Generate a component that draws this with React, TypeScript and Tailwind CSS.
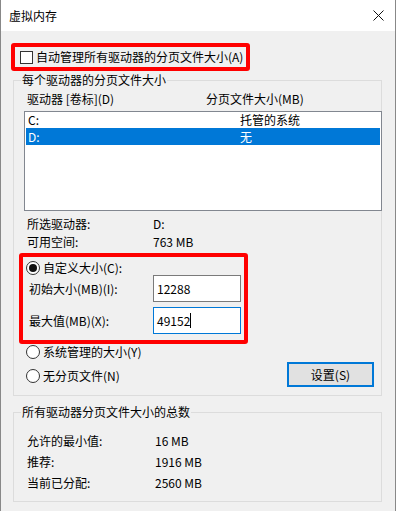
import { FC, ReactNode } from "react";

const font = "font-['Noto_Sans_CJK_SC','Noto_Sans',sans-serif]";

const Radio: FC<{ checked?: boolean }> = ({ checked }) => (
  <span className="w-[14px] h-[14px] rounded-full border border-[#333] bg-white flex items-center justify-center shrink-0">
    {checked && <span className="w-[8px] h-[8px] rounded-full bg-[#111]" />}
  </span>
);

const Group: FC<{ title: string; className?: string; children: ReactNode }> = (props) => (
  <div className={"relative ml-[12px] w-[369px] border border-[#dcdcdc] " + (props.className ?? "")}>
    <span className="absolute left-[7px] -top-[9px] px-[1px] bg-[#f0f0f0] leading-[16px]">{props.title}</span>
    {props.children}
  </div>
);

const App: FC = () => {
  return (
    <div className={"w-[396px] h-[511px] bg-[#f0f0f0] border-x border-[#888] text-[12px] text-black leading-[16px] overflow-hidden " + font}>
      <div className="h-[31px] bg-white flex items-center justify-between pl-2 pr-[10px]">
        <span>虚拟内存</span>
        <svg width="11" height="11" viewBox="0 0 11 11" className="mr-[1px]">
          <path d="M0.5 0.5 L10.5 10.5 M10.5 0.5 L0.5 10.5" stroke="#111" strokeWidth="1" />
        </svg>
      </div>

      <div className="mt-[12px] ml-[10px] w-[239px] h-[28px] border-4 border-[#ff0000] rounded-[3px] flex items-center pl-[5px] gap-[3px]">
        <span className="w-[13px] h-[13px] border border-[#333] bg-white" />
        <span>自动管理所有驱动器的分页文件大小(A)</span>
      </div>

      <Group title="每个驱动器的分页文件大小" className="mt-[9px] h-[316px]">
        <div className="flex mt-[10px] pl-[13px]">
          <span className="w-[179px]">驱动器 [卷标](D)</span>
          <span>分页文件大小(MB)</span>
        </div>
        <div className="mt-[4px] ml-[10px] w-[358px] h-[100px] border border-[#828790] bg-white">
          <div className="flex h-[16px] items-center mx-[1px] pl-[2px]">
            <span className="w-[212px]">C:</span>
            <span>托管的系统</span>
          </div>
          <div className="flex h-[17px] items-center mx-[1px] pl-[2px] bg-[#0078d7] text-white">
            <span className="w-[212px]">D:</span>
            <span>无</span>
          </div>
        </div>
        <div className="mt-[4px] pl-[13px] leading-[18px]">
          <div className="flex">
            <span className="w-[126px]">所选驱动器:</span>
            <span>D:</span>
          </div>
          <div className="flex">
            <span className="w-[126px]">可用空间:</span>
            <span>763 MB</span>
          </div>
        </div>

        <div className="mt-[2px] ml-[5px] w-[229px] h-[91px] border-4 border-[#ff0000] rounded-[3px]">
          <div className="mt-[3px] h-[15px] flex items-center pl-[3px] gap-[3px]">
            <Radio checked />
            <span>自定义大小(C):</span>
          </div>
          <div className="flex items-center pl-[6px]">
            <span className="w-[124px]">初始大小(MB)(I):</span>
            <div className="w-[88px] h-[27px] border border-[#7a7a7a] bg-white flex items-center pl-[3px]">12288</div>
          </div>
          <div className="flex items-center pl-[6px] mt-[5px]">
            <span className="w-[124px]">最大值(MB)(X):</span>
            <div className="w-[88px] h-[27px] border border-[#0078d7] bg-white flex items-center pl-[3px]">
              <span>49152</span>
              <span className="w-[1px] h-[15px] bg-black" />
            </div>
          </div>
        </div>

        <div className="h-[16px] flex items-center pl-[12px] gap-[3px]">
          <Radio />
          <span>系统管理的大小(Y)</span>
        </div>
        <div className="mt-[2px] flex items-center justify-between pl-[12px] pr-[7px]">
          <div className="flex items-center gap-[3px] mt-[3px]">
            <Radio />
            <span>无分页文件(N)</span>
          </div>
          <button className="w-[87px] h-[25px] border-2 border-[#0078d7] bg-[#e1e1e1] flex items-center justify-center">
            设置(S)
          </button>
        </div>
      </Group>

      <Group title="所有驱动器分页文件大小的总数" className="mt-[16px] h-[90px]">
        <div className="pt-[17px] pl-[13px] leading-[21px]">
          <div className="flex">
            <span className="w-[128px]">允许的最小值:</span>
            <span>16 MB</span>
          </div>
          <div className="flex">
            <span className="w-[128px]">推荐:</span>
            <span>1916 MB</span>
          </div>
          <div className="flex">
            <span className="w-[128px]">当前已分配:</span>
            <span>2560 MB</span>
          </div>
        </div>
      </Group>
    </div>
  );
};

export default App;
